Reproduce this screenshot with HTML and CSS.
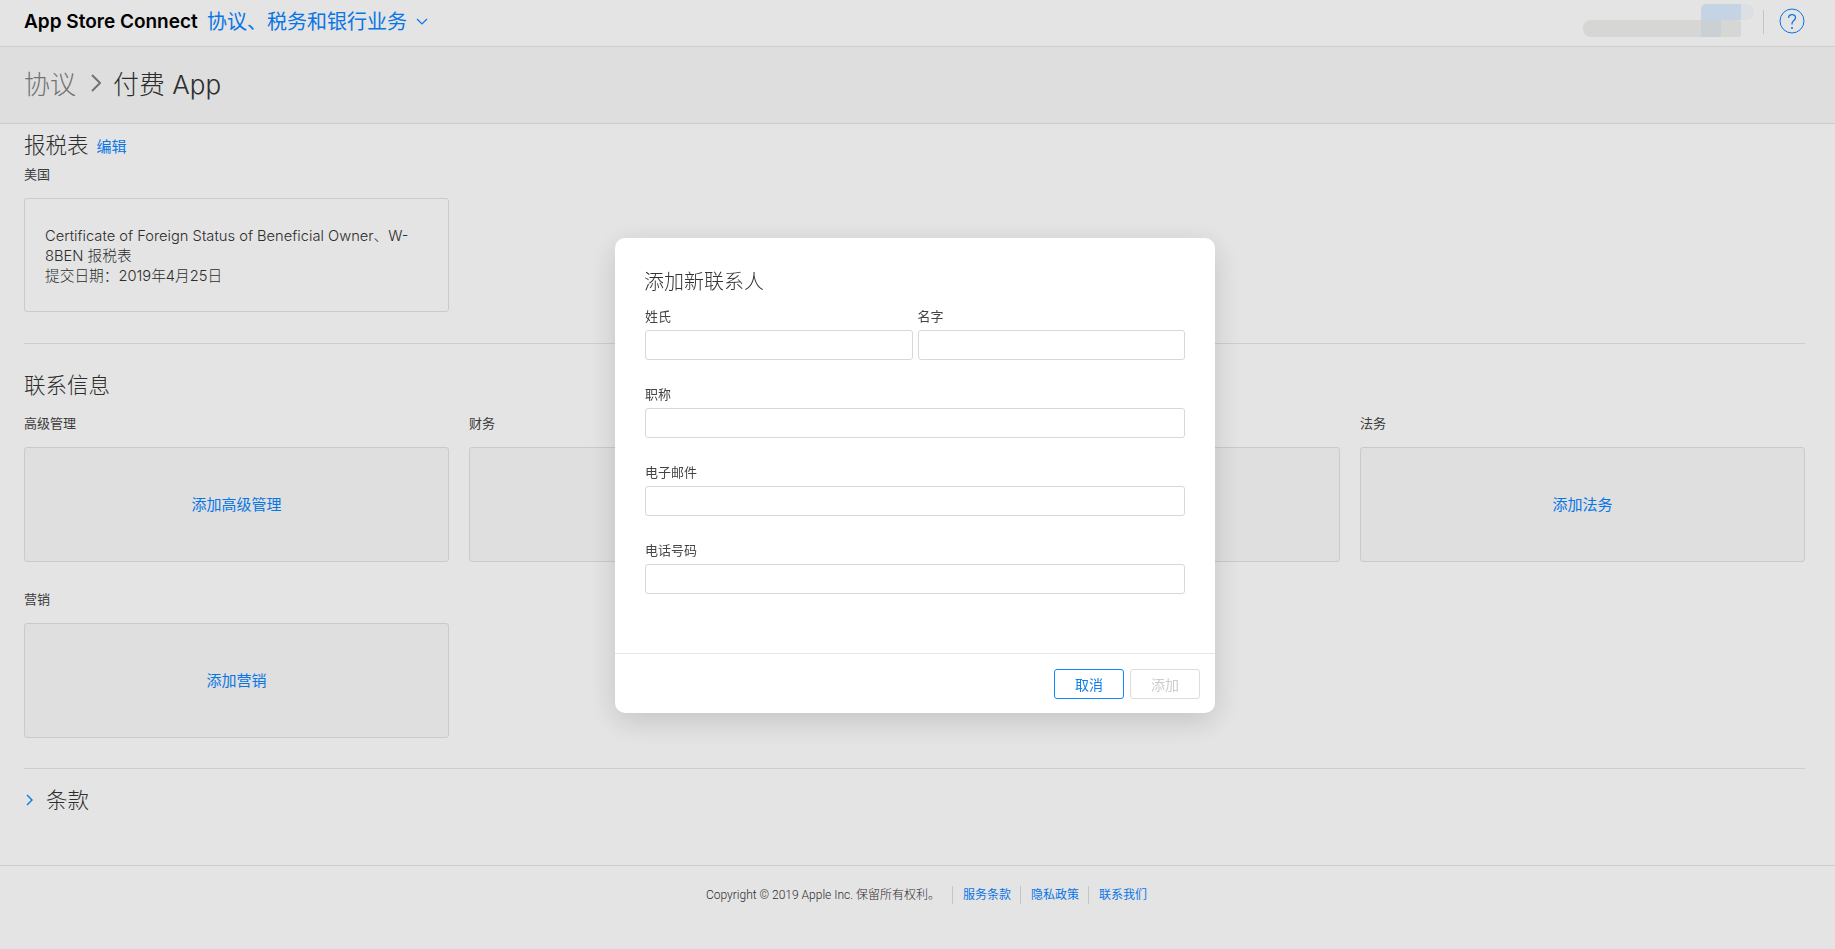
FILE: index.html
```html
<!DOCTYPE html>
<html lang="zh-CN">
<head>
  <meta charset="UTF-8" />
  <meta name="viewport" content="width=device-width, initial-scale=1.0"/>
  <title>协议、税务和银行业务 - App Store Connect</title>
  <link rel="stylesheet" href="styles.css">
</head>
<body>

<header class="topbar">
  <span class="brand">App Store Connect</span>
  <a class="section-menu" href="#">协议、税务和银行业务
    <svg class="menu-chevron" viewBox="0 0 12 7" width="12" height="7"><path d="M1 1l5 5 5-5" fill="none" stroke="#0a84ff" stroke-width="1.2"/></svg>
  </a>
  <div class="topbar-right">
    <!-- 打码的账户名 -->
    <div class="account-blur">
      <span class="blur-gray"></span>
      <span class="blur-overlap"></span>
      <span class="blur-blue"></span>
      <span class="blur-blue-light"></span>
    </div>
    <span class="topbar-sep"></span>
    <svg class="help-icon" viewBox="0 0 26 26" width="26" height="26">
      <circle cx="13" cy="13" r="12" fill="none" stroke="#0a84ff" stroke-width="1"/>
      <path d="M9.6 10c0-2 1.500-3.300 3.500-3.300s3.400 1.300 3.400 3c0 2.800-3.500 2.800-3.500 6v.8" fill="none" stroke="#0a84ff" stroke-width="1.300"/>
      <circle cx="13" cy="20" r="1" fill="#0a84ff"/>
    </svg>
  </div>
</header>

<div class="crumbs">
  <span class="crumb-parent">协议</span>
  <svg class="crumb-chevron" viewBox="0 0 10 18" width="10" height="18"><path d="M1 1l8 8-8 8" fill="none" stroke="#808080" stroke-width="2"/></svg>
  <span class="crumb-current">付费 App</span>
</div>

<main class="content">
  <div class="section-head">
    <h2 class="section-title">报税表</h2>
    <a class="edit-link" href="#">编辑</a>
  </div>
  <div class="field-label tax-label">美国</div>
  <div class="card tax-card">
    Certificate of Foreign Status of Beneficial Owner、W-8BEN 报税表<br>
    提交日期：2019年4月25日
  </div>

  <hr class="divider contact-divider">

  <h2 class="section-title">联系信息</h2>
  <div class="contact-grid">
    <div>
      <div class="field-label">高级管理</div>
      <a class="card add-card" href="#">添加高级管理</a>
    </div>
    <div>
      <div class="field-label">财务</div>
      <a class="card add-card" href="#">添加财务</a>
    </div>
    <div>
      <div class="field-label">技术</div>
      <a class="card add-card" href="#">添加技术</a>
    </div>
    <div>
      <div class="field-label">法务</div>
      <a class="card add-card" href="#">添加法务</a>
    </div>
    <div>
      <div class="field-label">营销</div>
      <a class="card add-card" href="#">添加营销</a>
    </div>
  </div>

  <hr class="divider terms-divider">

  <div class="terms-row">
    <svg class="terms-chevron" viewBox="0 0 7 12" width="7" height="12"><path d="M1 1l5 5-5 5" fill="none" stroke="#0a84ff" stroke-width="1.400"/></svg>
    <h2 class="section-title">条款</h2>
  </div>
</main>

<footer class="footer">
  <span class="copyright">Copyright © 2019 Apple Inc. 保留所有权利。</span>
  <a class="footer-link" href="#">服务条款</a>
  <a class="footer-link" href="#">隐私政策</a>
  <a class="footer-link" href="#">联系我们</a>
</footer>

<!-- 添加联系人弹窗 -->
<div class="overlay">
  <div class="modal">
    <div class="modal-body">
      <h3 class="modal-title">添加新联系人</h3>
      <div class="name-row">
        <div class="name-field">
          <label class="input-label">姓氏</label>
          <input class="text-input" type="text">
        </div>
        <div class="name-field">
          <label class="input-label">名字</label>
          <input class="text-input" type="text">
        </div>
      </div>
      <div class="form-row">
        <label class="input-label">职称</label>
        <input class="text-input" type="text">
      </div>
      <div class="form-row">
        <label class="input-label">电子邮件</label>
        <input class="text-input" type="text">
      </div>
      <div class="form-row">
        <label class="input-label">电话号码</label>
        <input class="text-input" type="text">
      </div>
    </div>
    <div class="modal-footer">
      <button class="btn btn-cancel">取消</button>
      <button class="btn btn-add" disabled>添加</button>
    </div>
  </div>
</div>

</body>
</html>
```

FILE: styles.css
```css
body {
  font-family: Inter, "Noto Sans CJK SC", sans-serif;
  font-weight: 400;
  margin: 0;
  padding: 0;
  background-color: #ffffff;
  color: #333;
  height: 949px;
  overflow: hidden;
}

a {
  color: #0a84ff;
  text-decoration: none;
}

.topbar {
  height: 47px;
  box-sizing: border-box;
  display: flex;
  align-items: center;
  padding: 0 30px 3px 24px;
  border-bottom: 1px solid #e6e6e6;
}

.brand {
  font-size: 19px;
  font-weight: 600;
  color: #000;
  width: 183px;
  white-space: nowrap;
}

.section-menu {
  font-size: 20px;
  line-height: 42px;
  display: flex;
  align-items: center;
  gap: 9px;
}

.topbar-right {
  margin-left: auto;
  display: flex;
  align-items: center;
}

.account-blur {
  position: relative;
  width: 171px;
  height: 33px;
  margin-top: -3px;
  margin-right: 9px;
}

.blur-gray {
  position: absolute;
  left: 0;
  top: 16px;
  width: 158px;
  height: 17px;
  border-radius: 8px 3px 3px 8px;
  background: #f0f0ee;
}

.blur-overlap {
  position: absolute;
  left: 118px;
  top: 16px;
  width: 20px;
  height: 17px;
  background: #e2e9ed;
}

.blur-blue {
  position: absolute;
  left: 118px;
  top: 0;
  width: 40px;
  height: 16px;
  border-radius: 5px 0 0 0;
  background: #ddedff;
}

.blur-blue-light {
  position: absolute;
  left: 158px;
  top: 0;
  width: 13px;
  height: 16px;
  border-radius: 0 8px 8px 0;
  background: #f6fbff;
}

.topbar-sep {
  width: 1px;
  height: 24px;
  background: #dcdcdc;
  margin-right: 15px;
}

.help-icon {
  margin-top: -1px;
}

.crumbs {
  height: 77px;
  box-sizing: border-box;
  display: flex;
  align-items: center;
  padding: 0 0 5px 24px;
  background-color: #f9f9f9;
  border-bottom: 1px solid #e6e6e6;
  font-size: 26px;
  font-weight: 300;
}

.crumb-parent {
  color: #808080;
}

.crumb-chevron {
  margin: 0 12px 0 15px;
}

.crumb-current {
  color: #333;
}

.content {
  padding: 6px 30px 0 24px;
}

.section-head {
  display: flex;
  align-items: center;
  gap: 8px;
}

.section-title {
  font-size: 21.5px;
  font-weight: 300;
  line-height: 30px;
  margin: 0;
  color: #333;
}

.edit-link {
  font-size: 15px;
}

.field-label {
  font-size: 13px;
  line-height: 18px;
  color: #444;
}

.tax-label {
  margin-top: 5px;
}

.card {
  box-sizing: border-box;
  display: block;
  width: 425px;
  border: 1px solid #e2e2e2;
  border-radius: 3px;
  margin-top: 15px;
}

.tax-card {
  height: 114px;
  padding: 27px 30px 27px 20px;
  font-size: 14.7px;
  font-weight: 300;
  line-height: 20px;
  color: #333;
}

.divider {
  border: none;
  border-top: 1px solid #e6e6e6;
  margin: 0;
}

.contact-divider {
  margin: 31px 0 26px;
}

.contact-grid {
  display: grid;
  grid-template-columns: 425px 425px 426px 1fr;
  column-gap: 20px;
  row-gap: 28px;
  margin-top: 14px;
}

.add-card {
  height: 115px;
  line-height: 113px;
  width: auto;
  text-align: center;
  font-size: 15px;
  background-color: #fafafa;
}

.terms-divider {
  margin: 30px 0 16px;
}

.terms-row {
  display: flex;
  align-items: center;
  gap: 13px;
  padding-left: 2px;
}

.footer {
  margin-top: 50px;
  border-top: 1px solid #e6e6e6;
  display: flex;
  justify-content: center;
  align-items: center;
  padding: 20px 0 0 27px;
  font-size: 12px;
  line-height: 18px;
}

.copyright {
  font-family: Roboto, "Noto Sans CJK SC", sans-serif;
  font-weight: 300;
  color: #333;
  margin-right: 12px;
}

.footer-link {
  border-left: 1px solid #dcdcdc;
  padding: 0 9px 0 10px;
}

/* 遮罩 */
.overlay {
  position: fixed;
  top: 0;
  left: 0;
  width: 100%;
  height: 100%;
  box-sizing: border-box;
  background: rgba(0, 0, 0, 0.105);
  display: flex;
  justify-content: center;
  align-items: flex-start;
  padding: 238px 5px 0 0;
}

.modal {
  width: 600px;
  height: 475px;
  display: flex;
  flex-direction: column;
  background: #ffffff;
  border-radius: 10px;
  box-shadow: 0 8px 30px rgba(0, 0, 0, 0.15);
}

.modal-body {
  flex-grow: 1;
  padding: 29px 30px 0;
}

.modal-title {
  font-size: 20px;
  font-weight: 300;
  line-height: 30px;
  margin: 0 0 10px -1px;
  color: #333;
}

.name-row {
  display: flex;
  gap: 5px;
}

.name-field {
  flex: 1;
}

.form-row {
  margin-top: 25px;
}

.input-label {
  display: block;
  font-size: 13px;
  line-height: 18px;
  margin-bottom: 5px;
  color: #444;
}

.text-input {
  box-sizing: border-box;
  display: block;
  width: 100%;
  height: 30px;
  border: 1px solid #d8d8d8;
  border-radius: 3px;
  background: #fff;
  outline: none;
}

.modal-footer {
  border-top: 1px solid #e6e6e6;
  height: 60px;
  box-sizing: border-box;
  padding: 15px 15px 0 0;
  display: flex;
  justify-content: flex-end;
  gap: 6px;
}

.btn {
  box-sizing: border-box;
  width: 70px;
  height: 30px;
  border-radius: 3px;
  background: #fff;
  font-family: inherit;
  font-weight: 400;
  font-size: 14px;
  padding: 0;
}

.btn-cancel {
  border: 1px solid #0f8bff;
  color: #0f7fef;
}

.btn-add {
  border: 1px solid #dddddd;
  color: #cccccc;
}
```
